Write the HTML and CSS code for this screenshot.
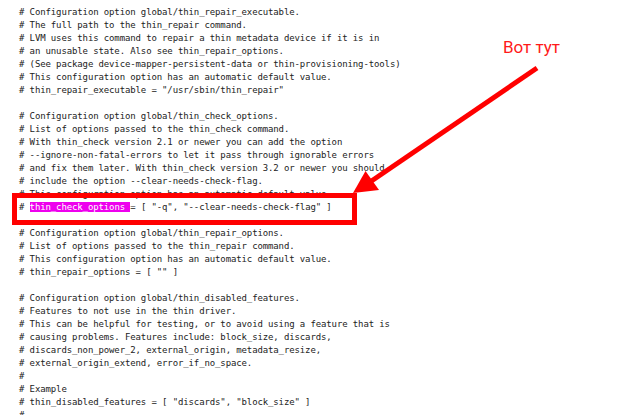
FILE: index.html
```html
<!DOCTYPE html>
<html lang="ru">
<head>
<meta charset="utf-8">
<link rel="stylesheet" href="styles.css">
</head>
<body>
<div class="page">
<pre class="code"># Configuration option global/thin_repair_executable.
# The full path to the thin_repair command.
# LVM uses this command to repair a thin metadata device if it is in
# an unusable state. Also see thin_repair_options.
# (See package device-mapper-persistent-data or thin-provisioning-tools)
# This configuration option has an automatic default value.
# thin_repair_executable = "/usr/sbin/thin_repair"

# Configuration option global/thin_check_options.
# List of options passed to the thin_check command.
# With thin_check version 2.1 or newer you can add the option
# --ignore-non-fatal-errors to let it pass through ignorable errors
# and fix them later. With thin_check version 3.2 or newer you should
# include the option --clear-needs-check-flag.
# This configuration option has an automatic default value.
# <span class="hl">thin_check_options </span>= [ "-q", "--clear-needs-check-flag" ]

# Configuration option global/thin_repair_options.
# List of options passed to the thin_repair command.
# This configuration option has an automatic default value.
# thin_repair_options = [ "" ]

# Configuration option global/thin_disabled_features.
# Features to not use in the thin driver.
# This can be helpful for testing, or to avoid using a feature that is
# causing problems. Features include: block_size, discards,
# discards_non_power_2, external_origin, metadata_resize,
# external_origin_extend, error_if_no_space.
#
# Example
# thin_disabled_features = [ "discards", "block_size" ]
#
</pre>
<div class="mark-box"></div>
<div class="label">Вот тут</div>
<svg class="arrow" width="640" height="415" viewBox="0 0 640 415">
  <line x1="537" y1="68" x2="370" y2="182" stroke="#ff0000" stroke-width="5"/>
  <polygon points="353,193 365.5,171 379,190" fill="#ff0000"/>
</svg>
</div>
</body>
</html>
```
FILE: styles.css
```css
html, body {
  margin: 0;
  padding: 0;
  background: #ffffff;
}
.page {
  position: relative;
  width: 640px;
  height: 415px;
  overflow: hidden;
}
.code {
  margin: 0;
  padding: 6px 0 0 19px;
  font-family: "DejaVu Sans Mono", "Liberation Mono", monospace;
  font-size: 9px;
  letter-spacing: -0.12px;
  line-height: 13px;
  color: #222222;
  white-space: pre;
}
.hl {
  background: #ee00ee;
  color: #ffffff;
}
.mark-box {
  position: absolute;
  left: 12px;
  top: 193px;
  width: 345px;
  height: 32px;
  box-sizing: border-box;
  border: 5px solid #ff0000;
}
.label {
  position: absolute;
  left: 503px;
  top: 39px;
  font-family: Roboto, "Liberation Sans", sans-serif;
  font-size: 17px;
  line-height: 16px;
  color: #ff1a1a;
}
.arrow {
  position: absolute;
  left: 0;
  top: 0;
}
```
